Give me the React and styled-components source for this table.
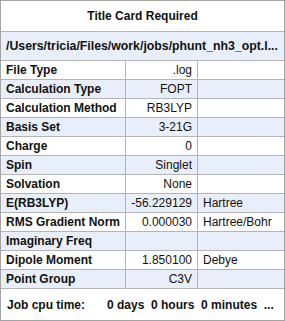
import React from 'react';
import styled, { createGlobalStyle } from 'styled-components';

const GlobalStyle = createGlobalStyle`
  body {
    margin: 0;
    background: #fff;
    font-family: "Liberation Sans", Arial, sans-serif;
  }
`;

const Card = styled.div`
  width: 285px;
  height: 321px;
  box-sizing: border-box;
  border: 1px solid #a4a4a4;
  display: flex;
  flex-direction: column;
  color: #111;
  font-size: 12px;
`;

const Title = styled.div`
  height: 30px;
  border-bottom: 1px solid #b4b4b4;
  display: flex;
  align-items: center;
  justify-content: center;
  font-weight: bold;
`;

const Path = styled.div`
  height: 28px;
  line-height: 28px;
  border-bottom: 1px solid #b4b4b4;
  background: #e9effa;
  padding: 0 5px;
  font-size: 12.3px;
  font-weight: bold;
  white-space: nowrap;
`;

const Row = styled.div`
  display: grid;
  grid-template-columns: 125px 72px 1fr;
  height: 18px;
  border-bottom: 1px solid #b4b4b4;
  background: ${p => (p.$alt ? '#e9effa' : '#fff')};
`;

const Cell = styled.div`
  display: flex;
  align-items: center;
  padding: 0 5px;
  white-space: nowrap;
  justify-content: ${p => (p.$align === 'right' ? 'flex-end' : 'flex-start')};
  font-weight: ${p => (p.$bold ? 'bold' : 'normal')};
  border-right: ${p => (p.$last ? 'none' : '1px solid #b4b4b4')};
`;

const Footer = styled.div`
  flex: 1;
  display: flex;
  align-items: center;
  padding: 0 6px;
  font-weight: bold;
  white-space: nowrap;
`;

const FooterLabel = styled.span`
  width: 100px;
  flex-shrink: 0;
`;

const rows = [
  ['File Type', '.log', ''],
  ['Calculation Type', 'FOPT', ''],
  ['Calculation Method', 'RB3LYP', ''],
  ['Basis Set', '3-21G', ''],
  ['Charge', '0', ''],
  ['Spin', 'Singlet', ''],
  ['Solvation', 'None', ''],
  ['E(RB3LYP)', '-56.229129', 'Hartree'],
  ['RMS Gradient Norm', '0.000030', 'Hartree/Bohr'],
  ['Imaginary Freq', '', ''],
  ['Dipole Moment', '1.850100', 'Debye'],
  ['Point Group', 'C3V', ''],
];

export default function App() {
  return (
    <>
      <GlobalStyle />
      <Card>
        <Title>Title Card Required</Title>
        <Path>/Users/tricia/Files/work/jobs/phunt_nh3_opt.l...</Path>
        {rows.map(([label, value, unit], i) => (
          <Row key={label} $alt={i % 2 === 1}>
            <Cell $bold>{label}</Cell>
            <Cell $align="right">{value}</Cell>
            <Cell $last>{unit}</Cell>
          </Row>
        ))}
        <Footer>
          <FooterLabel>Job cpu time:</FooterLabel>
          <span>0 days&nbsp; 0 hours&nbsp; 0 minutes&nbsp; ...</span>
        </Footer>
      </Card>
    </>
  );
}
